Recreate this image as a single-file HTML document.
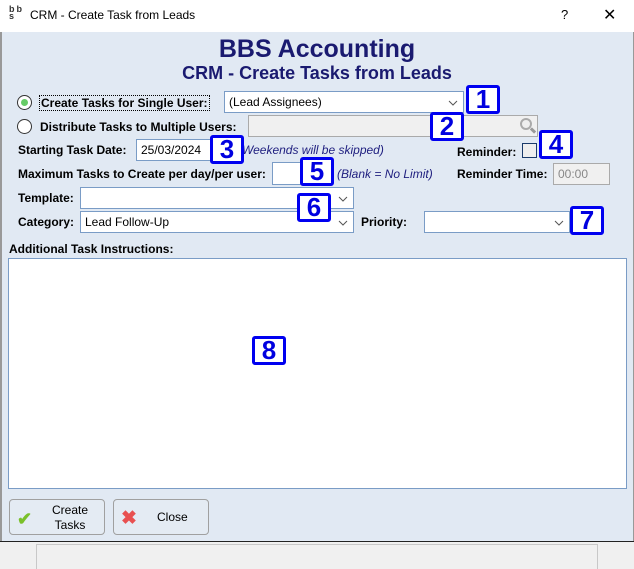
<!DOCTYPE html>
<html><head><style>
*{margin:0;padding:0;box-sizing:border-box}
body{width:634px;height:569px;position:relative;overflow:hidden;font-family:"Liberation Sans",sans-serif;background:#e1e9f3;font-size:12px;color:#000}
.a{position:absolute}
.b{font-weight:bold;font-size:12px;white-space:nowrap}
.inp{position:absolute;background:#fff;border:1px solid #7a9cc6;font-size:12px;padding:3px 4px;white-space:nowrap}
.chev{position:absolute;right:5px;top:8px;width:10px;height:6px}
.bad{position:absolute;border:3px solid #0000f0;border-radius:3px;background:#fff;color:#0000e0;font-weight:bold;font-size:26px;text-align:center;line-height:23px;width:34px;height:29px}
.it{position:absolute;font-style:italic;color:#202080;font-size:12px;white-space:nowrap}
.btn{position:absolute;border:1px solid #a0a0a0;border-radius:4px;background:#e4ebf3;font-size:12px}
</style></head><body>
<div class="a" style="left:0;top:0;width:634px;height:32px;background:#fff"></div>
<div class="a" style="left:9px;top:6px;font-size:9px;line-height:7px;font-weight:bold;color:#333">b<span style="display:inline-block;width:2px"></span>b<br>s<br></div>
<div class="a" style="left:30px;top:8px;font-size:12px">CRM - Create Task from Leads</div>
<div class="a" style="left:561px;top:7px;font-size:13px">?</div>
<div class="a" style="left:603px;top:5px;font-size:16px">✕</div>
<div class="a" style="left:0;top:32px;width:2px;height:510px;background:#999"></div>
<div class="a" style="left:633px;top:32px;width:1px;height:510px;background:#999"></div>

<div class="a" style="left:0;top:35px;width:634px;text-align:center;font-weight:bold;font-size:25px;color:#1a1a70">BBS Accounting</div>
<div class="a" style="left:0;top:63px;width:634px;text-align:center;font-weight:bold;font-size:18px;color:#1a1a70">CRM - Create Tasks from Leads</div>

<div class="a" style="left:17px;top:95px;width:15px;height:15px;border-radius:50%;border:1px solid #333;background:#fff"><div class="a" style="left:3px;top:3px;width:7px;height:7px;border-radius:50%;background:#6c6"></div></div>
<div class="a b" style="left:39px;top:95px;border:1px dotted #000;padding:0 1px">Create Tasks for Single User:</div>
<div class="inp" style="left:224px;top:91px;width:240px;height:22px">(Lead Assignees)<svg class="chev" viewBox="0 0 10 6"><path d="M1 1L5 5L9 1" fill="none" stroke="#555"/></svg></div>
<div class="bad" style="left:466px;top:85px">1</div>

<div class="a" style="left:17px;top:119px;width:15px;height:15px;border-radius:50%;border:1px solid #333;background:#fff"></div>
<div class="a b" style="left:40px;top:120px">Distribute Tasks to Multiple Users:</div>
<div class="inp" style="left:248px;top:115px;width:290px;height:22px;background:#f0f0f0;border-color:#aaa"></div>
<div class="a" style="left:520px;top:118px;width:12px;height:12px;border:2px solid #aaa;border-radius:50%;background:#eee"></div>
<div class="a" style="left:530px;top:129px;width:6px;height:3px;background:#999;transform:rotate(45deg)"></div>
<div class="bad" style="left:430px;top:112px">2</div>

<div class="a b" style="left:18px;top:143px">Starting Task Date:</div>
<div class="inp" style="left:136px;top:139px;width:77px;height:22px">25/03/2024</div>
<div class="it" style="left:238px;top:143px">(Weekends will be skipped)</div>
<div class="bad" style="left:210px;top:135px">3</div>
<div class="a b" style="left:457px;top:145px">Reminder:</div>
<div class="a" style="left:522px;top:143px;width:15px;height:15px;border:1px solid #1a3a6a;background:#eee"></div>
<div class="bad" style="left:539px;top:130px">4</div>

<div class="a b" style="left:18px;top:167px">Maximum Tasks to Create per day/per user:</div>
<div class="inp" style="left:272px;top:162px;width:30px;height:23px"></div>
<div class="bad" style="left:300px;top:157px">5</div>
<div class="it" style="left:337px;top:167px">(Blank = No Limit)</div>
<div class="a b" style="left:457px;top:167px">Reminder Time:</div>
<div class="inp" style="left:553px;top:163px;width:57px;height:22px;background:#f0f0f0;border-color:#aaa;color:#888">00:00</div>

<div class="a b" style="left:18px;top:191px">Template:</div>
<div class="inp" style="left:80px;top:187px;width:274px;height:22px"><svg class="chev" viewBox="0 0 10 6"><path d="M1 1L5 5L9 1" fill="none" stroke="#555"/></svg></div>
<div class="a b" style="left:18px;top:215px">Category:</div>
<div class="inp" style="left:80px;top:211px;width:274px;height:22px">Lead Follow-Up<svg class="chev" viewBox="0 0 10 6"><path d="M1 1L5 5L9 1" fill="none" stroke="#555"/></svg></div>
<div class="bad" style="left:297px;top:193px">6</div>
<div class="a b" style="left:361px;top:215px">Priority:</div>
<div class="inp" style="left:424px;top:211px;width:146px;height:22px"><svg class="chev" viewBox="0 0 10 6"><path d="M1 1L5 5L9 1" fill="none" stroke="#555"/></svg></div>
<div class="bad" style="left:570px;top:206px">7</div>

<div class="a b" style="left:9px;top:242px">Additional Task Instructions:</div>
<div class="inp" style="left:8px;top:258px;width:619px;height:231px"></div>
<div class="bad" style="left:252px;top:336px">8</div>

<div class="btn" style="left:9px;top:499px;width:96px;height:36px">
<div class="a" style="left:7px;top:9px;color:#7ac02a;font-size:18px;font-weight:bold">✔</div>
<div class="a" style="left:38px;top:3px;width:44px;text-align:center;line-height:15px">Create<br>Tasks</div></div>
<div class="btn" style="left:113px;top:499px;width:96px;height:36px">
<div class="a" style="left:7px;top:7px;color:#e85050;font-size:19px;font-weight:bold">✖</div>
<div class="a" style="left:43px;top:10px">Close</div></div>

<div class="a" style="left:0;top:541px;width:634px;height:28px;background:#f0f0f0;border-top:1px solid #222"></div>
<div class="a" style="left:36px;top:544px;width:562px;height:25px;border:1px solid #c8c8c8;border-bottom:none"></div>
</body></html>
